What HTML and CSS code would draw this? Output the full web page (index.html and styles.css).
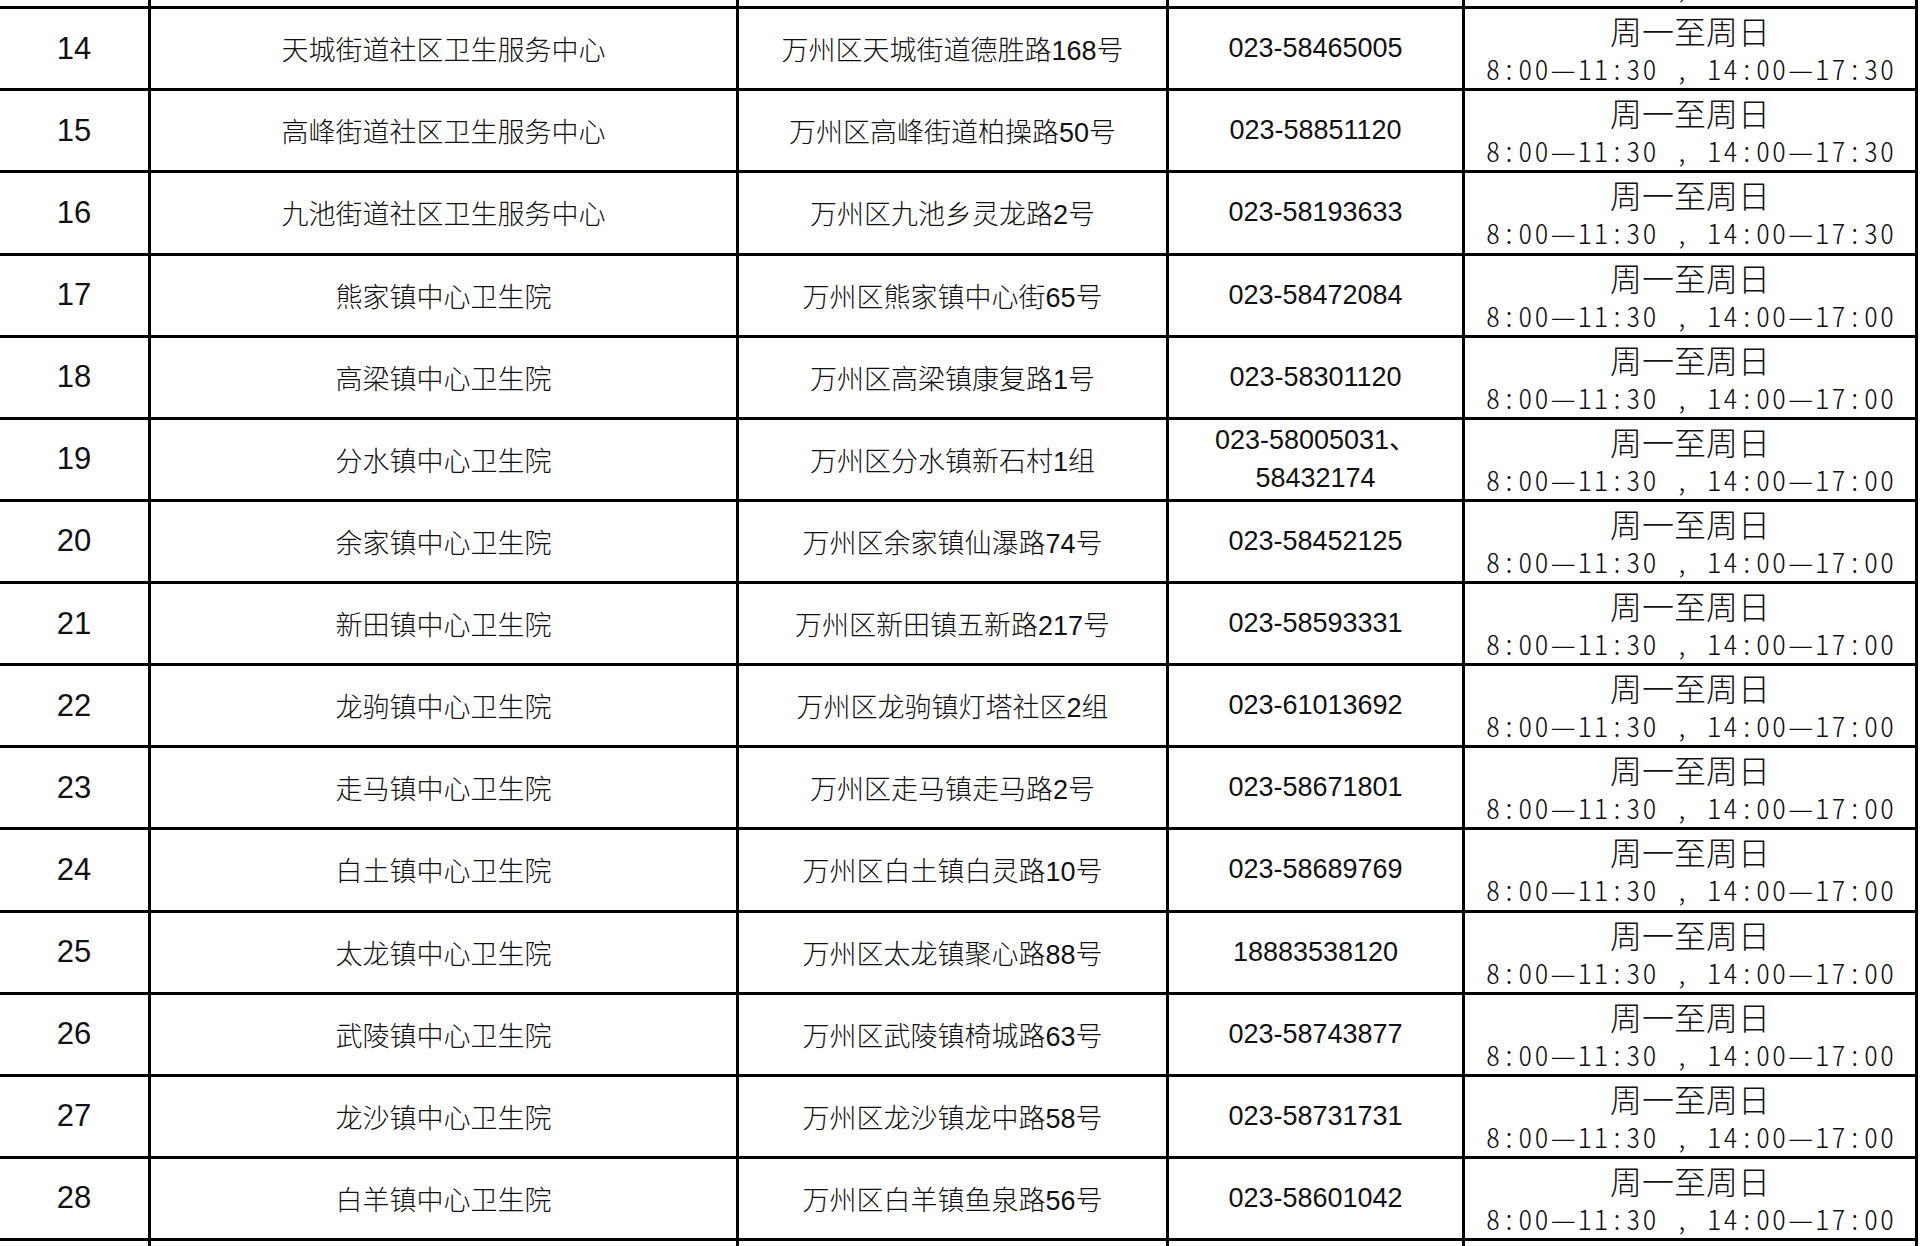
FILE: index.html
```html
<!DOCTYPE html>
<html lang="zh-CN">
<head>
<meta charset="utf-8">
<title>万州区医疗机构</title>
<link rel="stylesheet" href="styles.css">
</head>
<body>
<div class="sheet">
  <div class="row partial">
    <div class="cell idx"></div>
    <div class="cell name"></div>
    <div class="cell addr"></div>
    <div class="cell phone"></div>
    <div class="cell hours"><span class="days">周一至周日</span><span class="time">8:00—11:30 , 14:00—17:30</span></div>
  </div>
  <div class="row">
    <div class="cell idx">14</div>
    <div class="cell name">天城街道社区卫生服务中心</div>
    <div class="cell addr">万州区天城街道德胜路168号</div>
    <div class="cell phone">023-58465005</div>
    <div class="cell hours"><span class="days">周一至周日</span><span class="time">8:00—11:30 , 14:00—17:30</span></div>
  </div>
  <div class="row">
    <div class="cell idx">15</div>
    <div class="cell name">高峰街道社区卫生服务中心</div>
    <div class="cell addr">万州区高峰街道柏操路50号</div>
    <div class="cell phone">023-58851120</div>
    <div class="cell hours"><span class="days">周一至周日</span><span class="time">8:00—11:30 , 14:00—17:30</span></div>
  </div>
  <div class="row">
    <div class="cell idx">16</div>
    <div class="cell name">九池街道社区卫生服务中心</div>
    <div class="cell addr">万州区九池乡灵龙路2号</div>
    <div class="cell phone">023-58193633</div>
    <div class="cell hours"><span class="days">周一至周日</span><span class="time">8:00—11:30 , 14:00—17:30</span></div>
  </div>
  <div class="row">
    <div class="cell idx">17</div>
    <div class="cell name">熊家镇中心卫生院</div>
    <div class="cell addr">万州区熊家镇中心街65号</div>
    <div class="cell phone">023-58472084</div>
    <div class="cell hours"><span class="days">周一至周日</span><span class="time">8:00—11:30 , 14:00—17:00</span></div>
  </div>
  <div class="row">
    <div class="cell idx">18</div>
    <div class="cell name">高梁镇中心卫生院</div>
    <div class="cell addr">万州区高梁镇康复路1号</div>
    <div class="cell phone">023-58301120</div>
    <div class="cell hours"><span class="days">周一至周日</span><span class="time">8:00—11:30 , 14:00—17:00</span></div>
  </div>
  <div class="row">
    <div class="cell idx">19</div>
    <div class="cell name">分水镇中心卫生院</div>
    <div class="cell addr">万州区分水镇新石村1组</div>
    <div class="cell phone two"><span>023-58005031、</span><span>58432174</span></div>
    <div class="cell hours"><span class="days">周一至周日</span><span class="time">8:00—11:30 , 14:00—17:00</span></div>
  </div>
  <div class="row">
    <div class="cell idx">20</div>
    <div class="cell name">余家镇中心卫生院</div>
    <div class="cell addr">万州区余家镇仙瀑路74号</div>
    <div class="cell phone">023-58452125</div>
    <div class="cell hours"><span class="days">周一至周日</span><span class="time">8:00—11:30 , 14:00—17:00</span></div>
  </div>
  <div class="row">
    <div class="cell idx">21</div>
    <div class="cell name">新田镇中心卫生院</div>
    <div class="cell addr">万州区新田镇五新路217号</div>
    <div class="cell phone">023-58593331</div>
    <div class="cell hours"><span class="days">周一至周日</span><span class="time">8:00—11:30 , 14:00—17:00</span></div>
  </div>
  <div class="row">
    <div class="cell idx">22</div>
    <div class="cell name">龙驹镇中心卫生院</div>
    <div class="cell addr">万州区龙驹镇灯塔社区2组</div>
    <div class="cell phone">023-61013692</div>
    <div class="cell hours"><span class="days">周一至周日</span><span class="time">8:00—11:30 , 14:00—17:00</span></div>
  </div>
  <div class="row">
    <div class="cell idx">23</div>
    <div class="cell name">走马镇中心卫生院</div>
    <div class="cell addr">万州区走马镇走马路2号</div>
    <div class="cell phone">023-58671801</div>
    <div class="cell hours"><span class="days">周一至周日</span><span class="time">8:00—11:30 , 14:00—17:00</span></div>
  </div>
  <div class="row">
    <div class="cell idx">24</div>
    <div class="cell name">白土镇中心卫生院</div>
    <div class="cell addr">万州区白土镇白灵路10号</div>
    <div class="cell phone">023-58689769</div>
    <div class="cell hours"><span class="days">周一至周日</span><span class="time">8:00—11:30 , 14:00—17:00</span></div>
  </div>
  <div class="row">
    <div class="cell idx">25</div>
    <div class="cell name">太龙镇中心卫生院</div>
    <div class="cell addr">万州区太龙镇聚心路88号</div>
    <div class="cell phone">18883538120</div>
    <div class="cell hours"><span class="days">周一至周日</span><span class="time">8:00—11:30 , 14:00—17:00</span></div>
  </div>
  <div class="row">
    <div class="cell idx">26</div>
    <div class="cell name">武陵镇中心卫生院</div>
    <div class="cell addr">万州区武陵镇椅城路63号</div>
    <div class="cell phone">023-58743877</div>
    <div class="cell hours"><span class="days">周一至周日</span><span class="time">8:00—11:30 , 14:00—17:00</span></div>
  </div>
  <div class="row">
    <div class="cell idx">27</div>
    <div class="cell name">龙沙镇中心卫生院</div>
    <div class="cell addr">万州区龙沙镇龙中路58号</div>
    <div class="cell phone">023-58731731</div>
    <div class="cell hours"><span class="days">周一至周日</span><span class="time">8:00—11:30 , 14:00—17:00</span></div>
  </div>
  <div class="row">
    <div class="cell idx">28</div>
    <div class="cell name">白羊镇中心卫生院</div>
    <div class="cell addr">万州区白羊镇鱼泉路56号</div>
    <div class="cell phone">023-58601042</div>
    <div class="cell hours"><span class="days">周一至周日</span><span class="time">8:00—11:30 , 14:00—17:00</span></div>
  </div>
  <div class="row">
    <div class="cell idx"></div>
    <div class="cell name"></div>
    <div class="cell addr"></div>
    <div class="cell phone"></div>
    <div class="cell hours"></div>
  </div>
</div>
</body>
</html>
```

FILE: styles.css
```css
html, body {
  margin: 0;
  padding: 0;
  background: #ffffff;
}
body {
  width: 1920px;
  height: 1246px;
  overflow: hidden;
  color: #111111;
  font-family: "Liberation Sans", "Noto Sans CJK SC", sans-serif;
}
.sheet {
  margin-top: -73px;
  width: 1918px;
}
.row {
  display: grid;
  grid-template-columns: 151px 588px 430px 296px 453px;
  height: 82.13px;
  box-sizing: border-box;
  border-bottom: 3px solid #000;
}
.cell {
  display: flex;
  flex-direction: column;
  align-items: center;
  justify-content: center;
  text-align: center;
  border-right: 3px solid #000;
  box-sizing: border-box;
  overflow: hidden;
  white-space: nowrap;
}
.idx {
  font-size: 31px;
}
.name {
  font-family: "Noto Sans CJK SC", sans-serif;
  font-size: 27px;
  font-weight: 300;
}
.addr {
  font-size: 27px;
  font-weight: 300;
}
.phone {
  font-size: 27px;
}
.phone.two {
  line-height: 38px;
}
.hours {
  justify-content: flex-start;
  padding-top: 3px;
}
.days {
  font-family: "Noto Sans CJK SC", sans-serif;
  font-size: 32px;
  line-height: 36px;
  font-weight: 300;
}
.time {
  font-family: "Noto Sans CJK SC", sans-serif;
  font-feature-settings: "hwid" 1;
  font-weight: 300;
  font-size: 28px;
  line-height: 40px;
  letter-spacing: 2.2px;
  text-indent: 2.2px;
}
```
